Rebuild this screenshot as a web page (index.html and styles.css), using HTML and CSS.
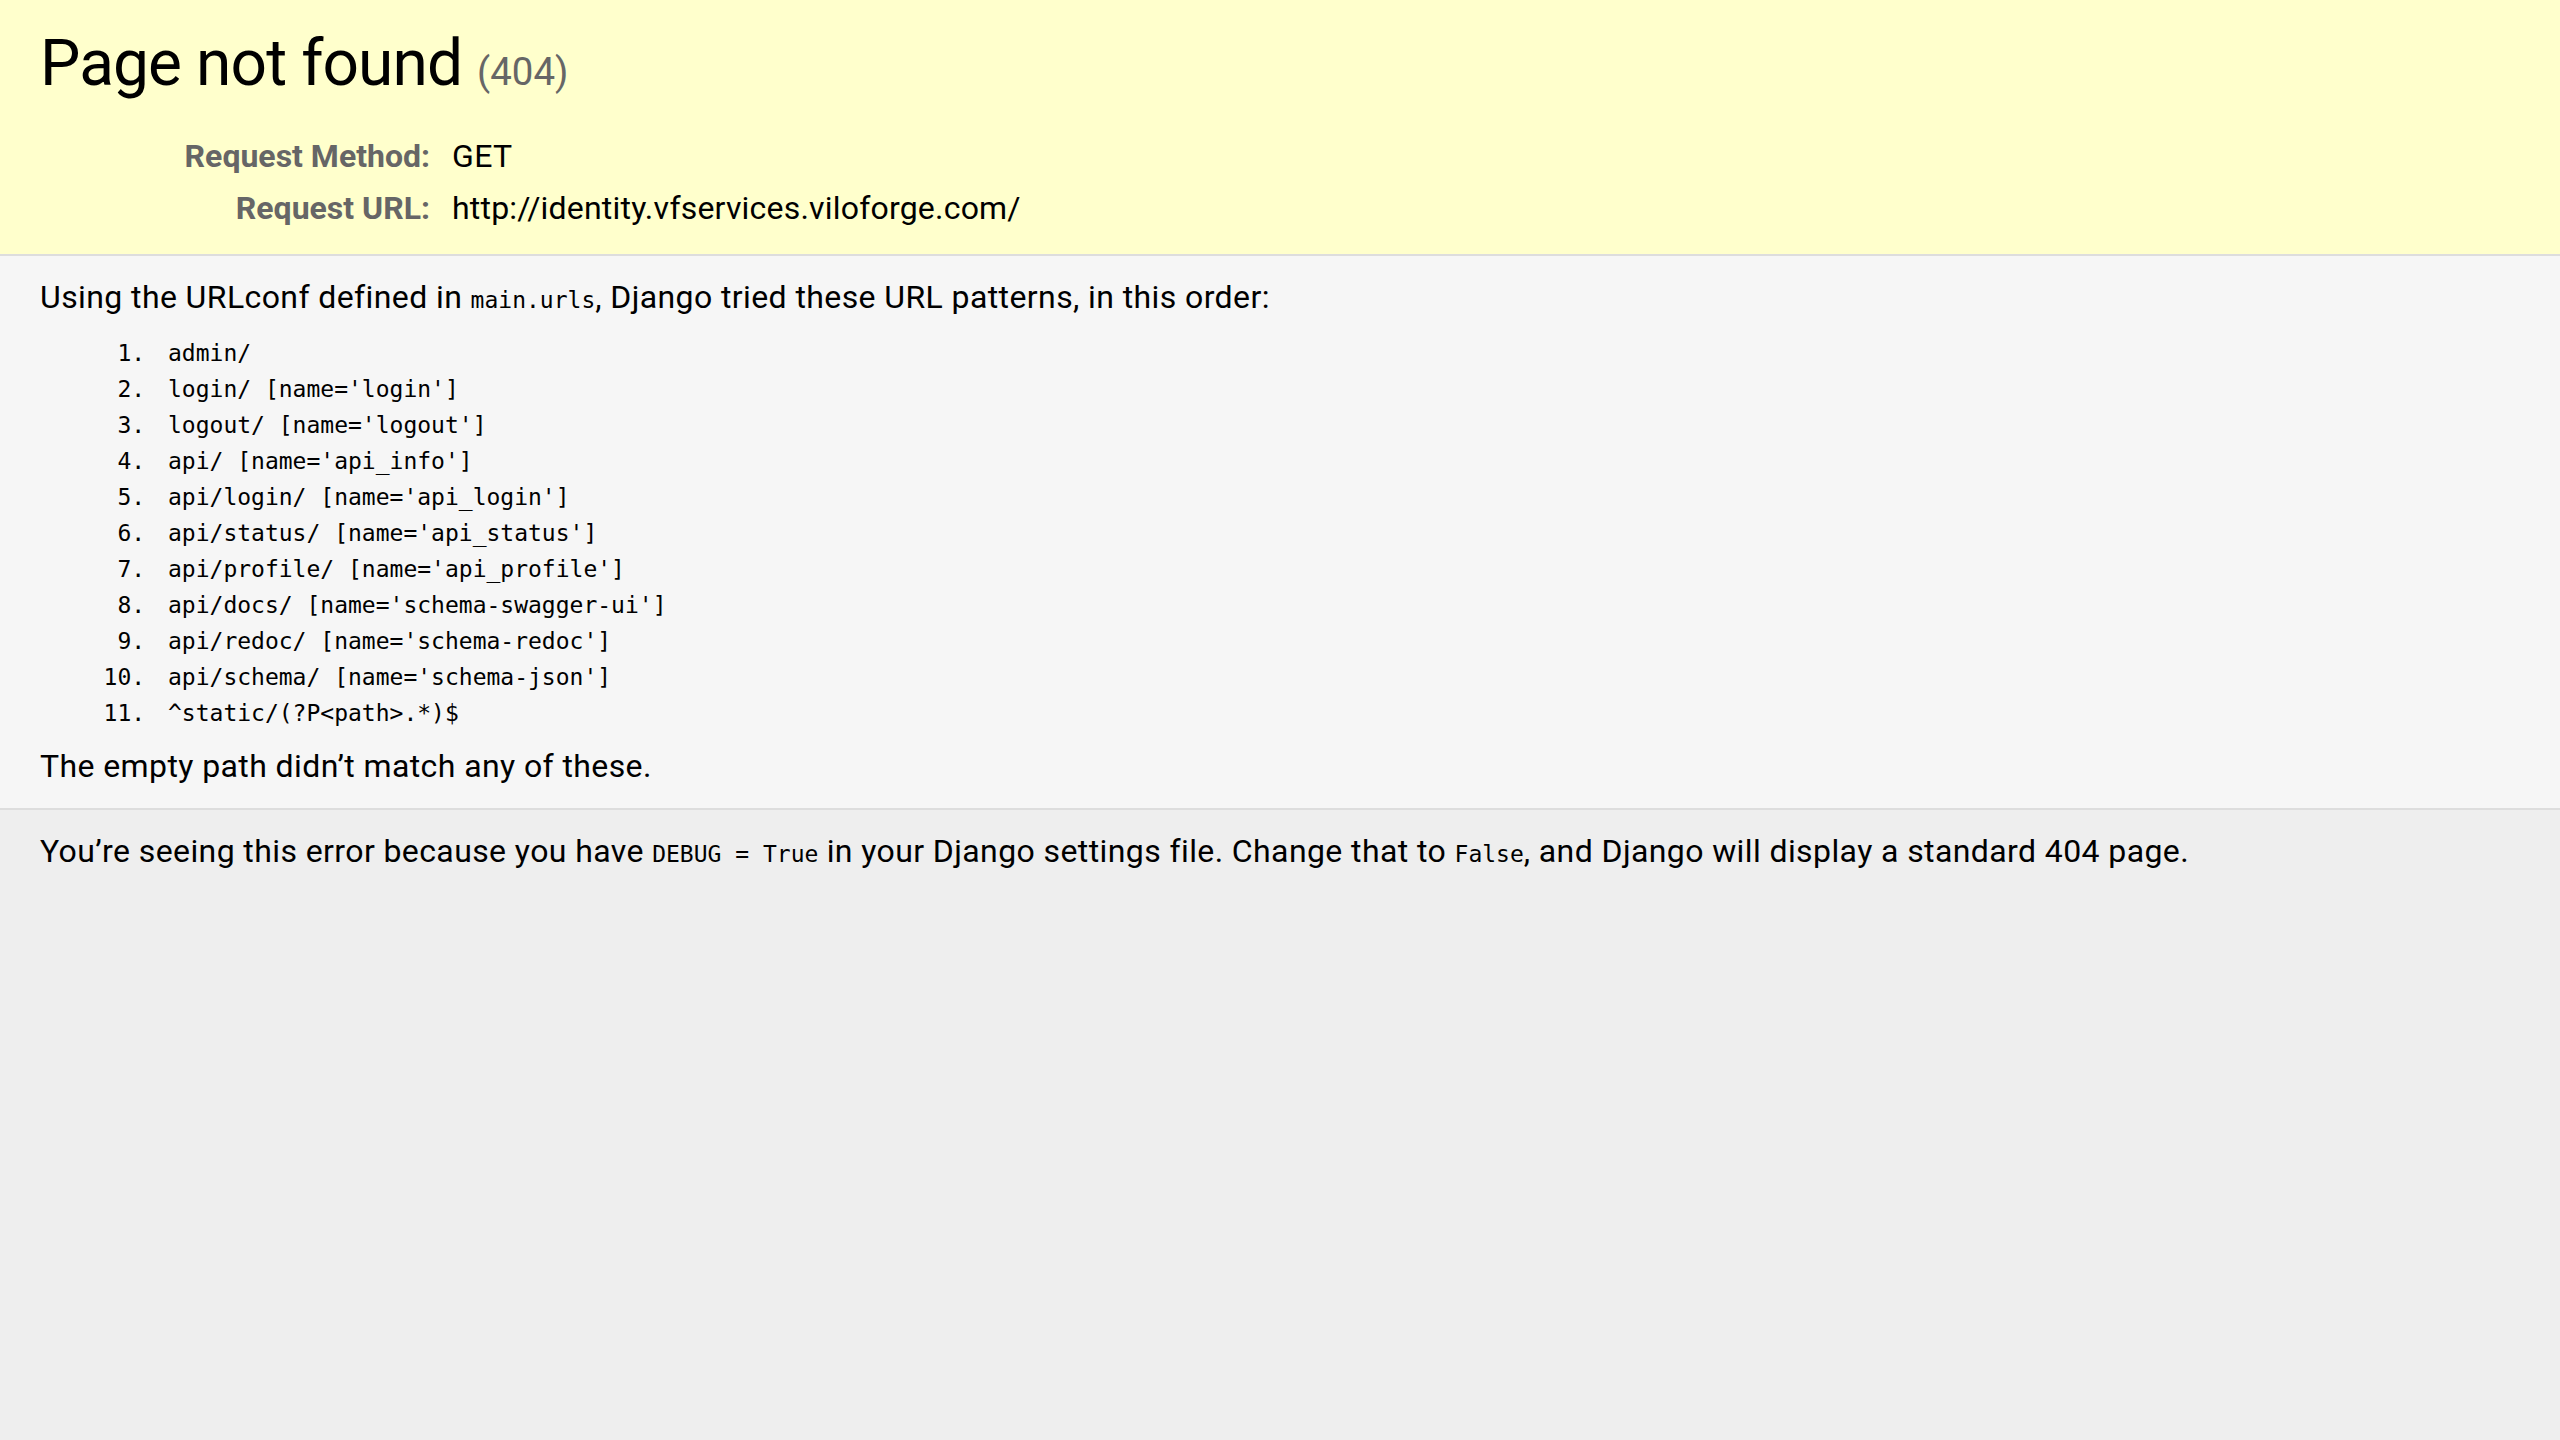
FILE: index.html
```html
<!DOCTYPE html>
<html lang="en">
<head>
<meta charset="utf-8">
<title>Page not found at /</title>
<link rel="stylesheet" href="styles.css">
</head>
<body>
  <header id="summary" class="summary">
    <h1 class="title">Page not found <small class="status">(404)</small></h1>
    <table class="meta">
      <tr>
        <th scope="row">Request Method:</th>
        <td>GET</td>
      </tr>
      <tr>
        <th scope="row">Request URL:</th>
        <td class="url">http://identity.vfservices.viloforge.com/</td>
      </tr>
    </table>
  </header>
  <main id="info" class="info">
    <p>Using the URLconf defined in <code>main.urls</code>, Django tried these URL patterns, in this order:</p>
    <ol class="patterns">
      <li><code>admin/</code></li>
      <li><code>login/ [name='login']</code></li>
      <li><code>logout/ [name='logout']</code></li>
      <li><code>api/ [name='api_info']</code></li>
      <li><code>api/login/ [name='api_login']</code></li>
      <li><code>api/status/ [name='api_status']</code></li>
      <li><code>api/profile/ [name='api_profile']</code></li>
      <li><code>api/docs/ [name='schema-swagger-ui']</code></li>
      <li><code>api/redoc/ [name='schema-redoc']</code></li>
      <li><code>api/schema/ [name='schema-json']</code></li>
      <li><code>^static/(?P&lt;path&gt;.*)$</code></li>
    </ol>
    <p>The empty path didn’t match any of these.</p>
  </main>
  <footer id="explanation" class="explanation">
    <p>You’re seeing this error because you have <code>DEBUG = True</code> in your Django settings file. Change that to <code>False</code>, and Django will display a standard 404 page.</p>
  </footer>
</body>
</html>
```
FILE: styles.css
```css
html * { margin: 0; padding: 0; }
html, body { margin: 0; padding: 0; }
body {
  font-family: Roboto, "Liberation Sans", sans-serif;
  font-size: 32px;
  line-height: 43.6px;
  letter-spacing: 0.4px;
  background: #eee;
  color: #000;
}
.summary, .info, .explanation {
  padding: 20px 40px;
  border-bottom: 2px solid #ddd;
}
.summary { background: #ffc; }
.info { background: #f6f6f6; }
.explanation { background: #eee; border-bottom: 0 none; }
.title {
  font-weight: normal;
  font-size: 64px;
  line-height: 87px;
  letter-spacing: -0.9px;
  margin-bottom: 16px;
}
.status { font-size: 60%; color: #666; font-weight: normal; letter-spacing: 0; }
.meta { border: none; border-collapse: collapse; width: 100%; }
.meta td, .meta th { vertical-align: top; padding: 4px 6px; text-align: left; }
.meta th { width: 384px; text-align: right; color: #666; padding-right: 16px; font-weight: bold; letter-spacing: 0; }
.meta .url { letter-spacing: 0.2px; }
code {
  font-family: "DejaVu Sans Mono", "Liberation Mono", monospace;
  font-size: 23px;
  letter-spacing: 0;
}
.patterns { margin: 12px 128px 14px 119px; }
.patterns li {
  font-family: "DejaVu Sans Mono", "Liberation Mono", monospace;
  font-size: 23px;
  line-height: 36px;
  letter-spacing: 0;
  padding-left: 9px;
}
```
